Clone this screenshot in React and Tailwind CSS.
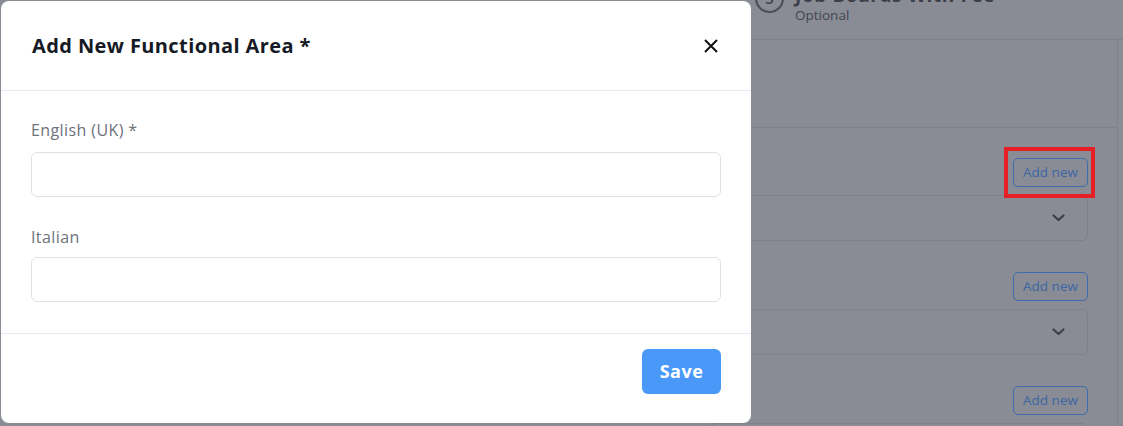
import React from "react";

const font = { fontFamily: '"Open Sans", "Noto Sans", sans-serif' };

function Chevron() {
  return (
    <svg width="13" height="8" viewBox="0 0 13 8" fill="none">
      <path d="M1.5 1.5 L6.5 6 L11.5 1.5" stroke="#3b3f49" strokeWidth="2.2" strokeLinecap="round" strokeLinejoin="round" />
    </svg>
  );
}

function Field({ highlight }) {
  return (
    <div className="flex flex-col shrink-0">
      <div className="flex justify-end h-[29px] relative shrink-0">
        <button className="h-[29px] w-[75px] rounded-[5px] border border-[#3f6cae] text-[13.5px] text-[#3d66a5] leading-none flex items-center justify-center mr-[29px]">
          Add new
        </button>
        {highlight && (
          <div className="absolute right-[22px] top-[-11px] w-[91px] h-[51px] border-[4px] border-[#e41f25]" />
        )}
      </div>
      <div className="mt-[8px] h-[46px] shrink-0 mr-[29px] ml-[-40px] rounded-[6px] border border-[#7e828b] flex items-center justify-end pr-[22px]">
        <Chevron />
      </div>
    </div>
  );
}

export default function App() {
  return (
    <div className="w-[1123px] h-[426px] relative overflow-hidden bg-[#898c94]" style={font}>
      {/* background page (dimmed) */}
      <div className="flex flex-col h-full">
        <div className="h-[40px] shrink-0 border-b border-[#7f828a] flex items-start pl-[755px] overflow-hidden">
          <div className="flex items-start gap-[11px] mt-[-16px]">
            <div className="w-[29px] h-[29px] shrink-0 rounded-full border-2 border-[#4a4e58] flex items-center justify-center text-[15px] font-semibold text-[#3b3f49]">
              5
            </div>
            <div className="flex flex-col">
              <span className="text-[19px] font-bold text-[#3b3f49] leading-[22px] tracking-[0.6px] whitespace-nowrap">Job Boards With Fee</span>
              <span className="text-[13.5px] text-[#414652] leading-[16px] mt-[1px]">Optional</span>
            </div>
          </div>
        </div>
        <div className="flex-1 flex min-h-0">
          <div className="w-[1118px] border-r border-[#7f828a] flex flex-col">
            <div className="h-[87px] shrink-0" />
            <div className="flex-1 border-t border-[#7f828a] pl-[750px] pt-[30px] flex flex-col gap-[31px]">
              <Field highlight />
              <Field />
              <Field />
            </div>
          </div>
        </div>
      </div>

      {/* modal */}
      <div className="absolute left-[1px] top-[1px] w-[750px] h-[422px] bg-white rounded-[8px] flex flex-col">
        <div className="h-[90px] shrink-0 border-b border-[#e9eaee] flex items-center justify-between pl-[31px] pr-[32px]">
          <h2 className="text-[20px] font-bold text-[#161a25] tracking-[0.4px]">Add New Functional Area *</h2>
          <svg width="16" height="16" viewBox="0 0 16 16" fill="none">
            <path d="M2 2 L14 14 M14 2 L2 14" stroke="#111" strokeWidth="2" />
          </svg>
        </div>
        <div className="flex-1 px-[30px] pt-[28px] flex flex-col">
          <label className="text-[16px] leading-[22px] text-[#6d717b] tracking-[0.4px]">English (UK) *</label>
          <div className="mt-[11px] h-[45px] shrink-0 rounded-[6px] border border-[#dfe1e7]" />
          <label className="mt-[29px] text-[16px] leading-[22px] text-[#6d717b] tracking-[0.4px]">Italian</label>
          <div className="mt-[9px] h-[45px] shrink-0 rounded-[6px] border border-[#dfe1e7]" />
        </div>
        <div className="h-[90px] shrink-0 border-t border-[#e9eaee] flex justify-end items-start pt-[15px] pr-[30px]">
          <button className="w-[79px] h-[45px] rounded-[6px] bg-[#4a99f9] text-white text-[18px] font-bold tracking-[0.5px]">
            Save
          </button>
        </div>
      </div>
    </div>
  );
}
